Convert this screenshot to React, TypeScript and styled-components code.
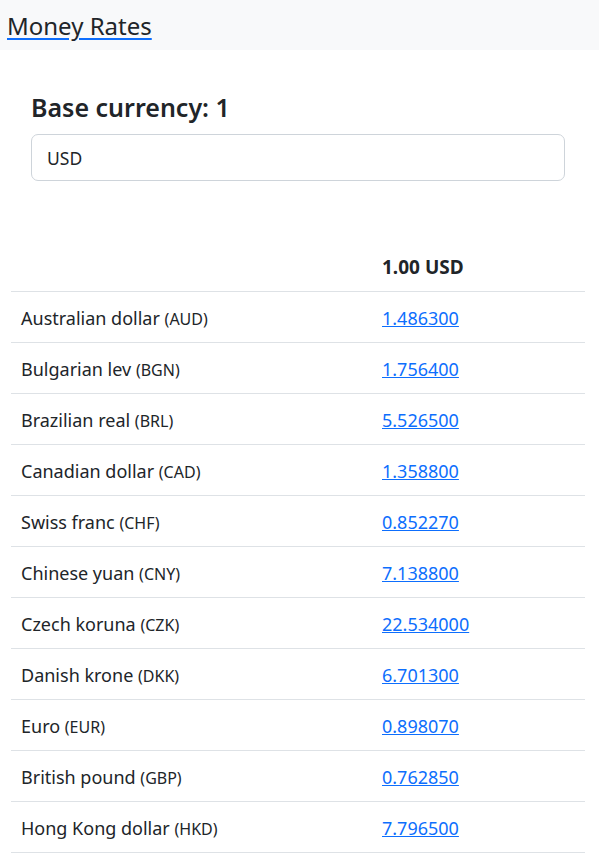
import React from "react";
import styled, { createGlobalStyle } from "styled-components";

const Global = createGlobalStyle`
  html, body { margin: 0; padding: 0; background: #fff; }
  body { font-family: "Noto Sans", "Open Sans", sans-serif; color: #212529; }
  * { box-sizing: border-box; }
`;

const Header = styled.header`
  height: 50px;
  background: #f8f9fa;
  display: flex;
  align-items: center;
  padding: 0 7px;
`;

const Brand = styled.a`
  font-size: 24px;
  color: #212529;
  text-decoration: underline;
  text-decoration-color: #0d6efd;
  text-underline-offset: 3px;
  text-decoration-thickness: 2px;
`;

const Main = styled.main`
  padding: 0 14px 0 11px;
`;

const BaseForm = styled.section`
  padding: 41px 20px 0 20px;
  display: flex;
  flex-direction: column;
  gap: 10px;
`;

const Title = styled.h4`
  margin: 0;
  font-size: 25px;
  font-weight: 600;
  line-height: 33px;
`;

const Input = styled.input`
  height: 47px;
  border: 1px solid #ced4da;
  border-radius: 7px;
  padding: 0 15px;
  font-family: inherit;
  font-size: 17.5px;
  color: #212529;
  outline: none;
`;

const Table = styled.table`
  margin-top: 60px;
  width: 100%;
  border-collapse: collapse;
`;

const Th = styled.th`
  text-align: left;
  font-weight: 700;
  font-size: 19px;
  line-height: 26px;
  padding: 13px 10px 11px;
  border-bottom: 1px solid #dee2e6;
`;

const Td = styled.td<{ $first?: boolean }>`
  font-size: 18px;
  line-height: 26px;
  padding: 13px 10px 11px;
  border-bottom: 1px solid #dee2e6;
  width: ${(p) => (p.$first ? "361px" : "auto")};
`;

const Code = styled.span`
  font-size: 16px;
  line-height: 1;
`;

const RateLink = styled.a`
  color: #0d6efd;
  text-decoration: underline;
`;

const rows: [string, string, string][] = [
  ["Australian dollar", "AUD", "1.486300"],
  ["Bulgarian lev", "BGN", "1.756400"],
  ["Brazilian real", "BRL", "5.526500"],
  ["Canadian dollar", "CAD", "1.358800"],
  ["Swiss franc", "CHF", "0.852270"],
  ["Chinese yuan", "CNY", "7.138800"],
  ["Czech koruna", "CZK", "22.534000"],
  ["Danish krone", "DKK", "6.701300"],
  ["Euro", "EUR", "0.898070"],
  ["British pound", "GBP", "0.762850"],
  ["Hong Kong dollar", "HKD", "7.796500"],
];

export default function App() {
  return (
    <>
      <Global />
      <Header>
        <Brand href="#">Money Rates</Brand>
      </Header>
      <Main>
        <BaseForm>
          <Title>Base currency: 1</Title>
          <Input defaultValue="USD" />
        </BaseForm>
        <Table>
          <thead>
            <tr>
              <Th></Th>
              <Th>1.00 USD</Th>
            </tr>
          </thead>
          <tbody>
            {rows.map(([name, code, rate]) => (
              <tr key={code}>
                <Td $first>
                  {name} <Code>({code})</Code>
                </Td>
                <Td>
                  <RateLink href="#">{rate}</RateLink>
                </Td>
              </tr>
            ))}
          </tbody>
        </Table>
      </Main>
    </>
  );
}
